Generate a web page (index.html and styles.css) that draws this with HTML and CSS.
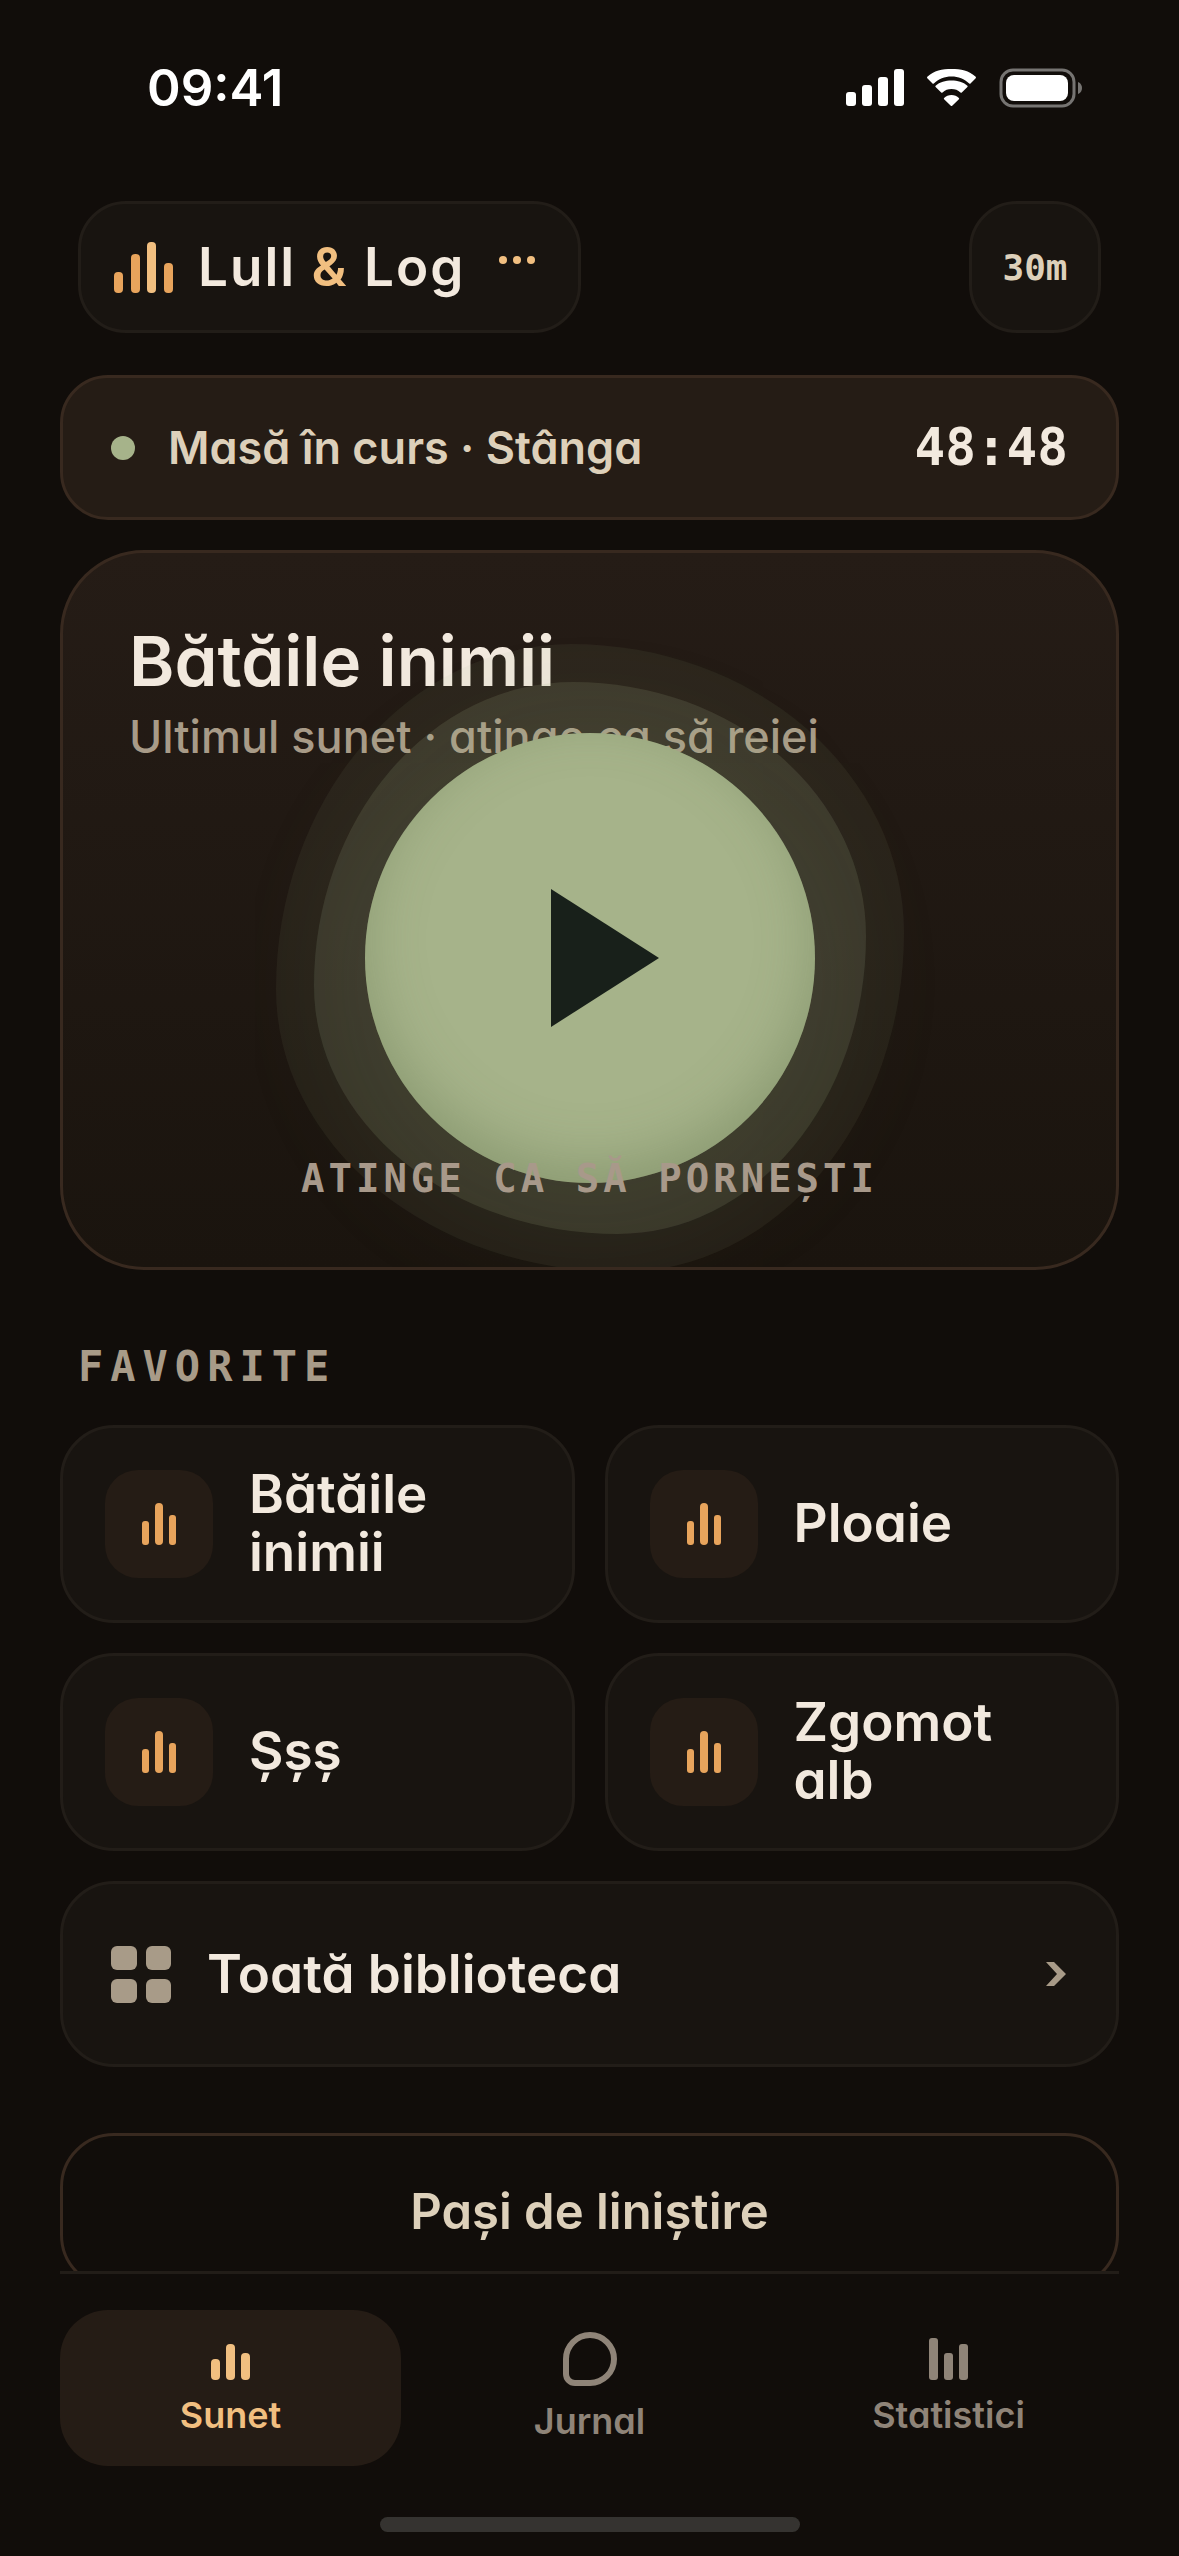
FILE: index.html
```html
<!DOCTYPE html>
<html lang="ro">
<head>
  <meta charset="utf-8">
  <meta name="viewport" content="width=device-width, initial-scale=1">
  <title>Lull &amp; Log</title>
  <link rel="stylesheet" href="styles.css">
</head>
<body>
  <div class="app">
    <div class="status-bar">
      <span class="status-time">09:41</span>
      <div class="status-icons">
        <svg width="58" height="38" viewBox="0 0 58 38" fill="#fff" aria-hidden="true">
          <rect x="0" y="23" width="10" height="14" rx="3"/>
          <rect x="16" y="16" width="10" height="21" rx="3"/>
          <rect x="32" y="8" width="10" height="29" rx="3"/>
          <rect x="48" y="0" width="10" height="37" rx="3"/>
        </svg>
        <svg width="51" height="38" viewBox="0 0 51 38" fill="#fff" aria-hidden="true">
          <path d="M25.500 7.500c6.800 0 13 2.600 17.700 7 .4.300 1 .300 1.300 0l5.200-5.300c.4-.4.400-1 0-1.400C43.200 1.600 34.600 0 25.500 0S7.800 1.600 1.300 7.800c-.4.400-.4 1 0 1.400l5.200 5.300c.3.300.9.300 1.300 0 4.700-4.400 10.900-7 17.700-7z"/>
          <path d="M25.500 20c3.400 0 6.600 1.200 9 3.400.4.400.9.400 1.300 0l5.600-5.300c.4-.4.400-1 0-1.400-4.200-3.800-9.800-5.200-15.900-5.200S13.800 12.900 9.600 16.700c-.4.400-.4 1 0 1.400l5.600 5.300c.4.400.9.400 1.300 0 2.400-2.200 5.600-3.400 9-3.400z"/>
          <path d="M32.900 28.900c.4.400.4.900 0 1.300l-6.700 6.600c-.4.400-1 .4-1.400 0l-6.700-6.600c-.4-.4-.4-.9 0-1.300 1.800-1.600 4.600-2.900 7.400-2.900s5.600 1.300 7.400 2.900z"/>
        </svg>
        <svg width="84" height="40" viewBox="0 0 84 40" aria-hidden="true">
          <rect x="2" y="2" width="73" height="36" rx="12" fill="none" stroke="#767472" stroke-width="3"/>
          <rect x="7" y="7" width="62" height="26" rx="8" fill="#fff"/>
          <path d="M79 14c3 1 4 4 4 6s-1 5-4 6z" fill="#767472"/>
        </svg>
      </div>
    </div>

    <header class="topbar">
      <button class="brand" type="button">
        <svg width="60" height="51" viewBox="0 0 60 51" fill="#e8a45c" aria-hidden="true">
          <rect x="0" y="30" width="9" height="21" rx="4"/>
          <rect x="17" y="12" width="9" height="39" rx="4"/>
          <rect x="33" y="0" width="9" height="51" rx="4" fill="#f1bf80"/>
          <rect x="50" y="21" width="9" height="30" rx="4"/>
        </svg>
        <span class="brand-name">Lull <span class="brand-amp">&amp;</span> Log</span>
        <svg class="brand-more" width="38" height="10" viewBox="0 0 38 10" fill="#f1bf80" aria-hidden="true">
          <circle cx="5" cy="5" r="4"/><circle cx="19" cy="5" r="4"/><circle cx="33" cy="5" r="4"/>
        </svg>
      </button>
      <button class="timer" type="button">30m</button>
    </header>

    <main class="content">
      <a class="session" href="#jurnal">
        <span class="session-dot"></span>
        <span class="session-label">Masă în curs · Stânga</span>
        <span class="session-time">48:48</span>
      </a>

      <section class="hero">
        <div class="hero-text">
          <h1 class="hero-title">Bătăile inimii</h1>
          <p class="hero-sub">Ultimul sunet · atinge ca să reiei</p>
        </div>
        <button class="orb" type="button" aria-label="Pornește">
          <span class="orb-ring orb-ring-outer"></span>
          <span class="orb-ring orb-ring-inner"></span>
          <span class="orb-disc">
            <svg width="108" height="138" viewBox="0 0 108 138" aria-hidden="true"><path d="M0 0L108 69L0 138z" fill="#18201a"/></svg>
          </span>
        </button>
        <p class="hero-hint">ATINGE CA SĂ PORNEȘTI</p>
      </section>

      <h2 class="section-title">FAVORITE</h2>
      <div class="favorites">
        <button class="favorite" type="button">
          <span class="favorite-icon"><svg width="34" height="42" viewBox="0 0 34 42" fill="#e8a45c" aria-hidden="true"><rect x="0" y="18" width="7" height="24" rx="3"/><rect x="13" y="0" width="8" height="42" rx="4"/><rect x="27" y="12" width="7" height="30" rx="3"/></svg></span>
          <span class="favorite-name">Bătăile inimii</span>
        </button>
        <button class="favorite" type="button">
          <span class="favorite-icon"><svg width="34" height="42" viewBox="0 0 34 42" fill="#e8a45c" aria-hidden="true"><rect x="0" y="18" width="7" height="24" rx="3"/><rect x="13" y="0" width="8" height="42" rx="4"/><rect x="27" y="12" width="7" height="30" rx="3"/></svg></span>
          <span class="favorite-name">Ploaie</span>
        </button>
        <button class="favorite" type="button">
          <span class="favorite-icon"><svg width="34" height="42" viewBox="0 0 34 42" fill="#e8a45c" aria-hidden="true"><rect x="0" y="18" width="7" height="24" rx="3"/><rect x="13" y="0" width="8" height="42" rx="4"/><rect x="27" y="12" width="7" height="30" rx="3"/></svg></span>
          <span class="favorite-name">Șșș</span>
        </button>
        <button class="favorite" type="button">
          <span class="favorite-icon"><svg width="34" height="42" viewBox="0 0 34 42" fill="#e8a45c" aria-hidden="true"><rect x="0" y="18" width="7" height="24" rx="3"/><rect x="13" y="0" width="8" height="42" rx="4"/><rect x="27" y="12" width="7" height="30" rx="3"/></svg></span>
          <span class="favorite-name">Zgomot alb</span>
        </button>
      </div>

      <a class="library" href="#biblioteca">
        <svg width="60" height="57" viewBox="0 0 60 57" fill="#a89b88" aria-hidden="true">
          <rect x="0" y="0" width="26" height="24" rx="6"/><rect x="35" y="0" width="25" height="24" rx="6"/>
          <rect x="0" y="33" width="26" height="24" rx="6"/><rect x="35" y="33" width="25" height="24" rx="6"/>
        </svg>
        <span class="library-label">Toată biblioteca</span>
        <svg width="22" height="24" viewBox="0 0 22 24" fill="#a89b88" aria-hidden="true"><path d="M0 0h8l12 12L8 24H0l11-12z"/></svg>
      </a>

      <button class="calm" type="button">Pași de liniștire</button>
    </main>

    <nav class="tabs">
      <a class="tab tab-active" href="#sunet" aria-current="page">
        <svg width="39" height="42" viewBox="0 0 39 42" fill="currentColor" aria-hidden="true"><rect x="0" y="21" width="9" height="21" rx="4"/><rect x="15" y="6" width="9" height="36" rx="4"/><rect x="30" y="15" width="9" height="27" rx="4"/></svg>
        <span>Sunet</span>
      </a>
      <a class="tab" href="#jurnal">
        <svg width="54" height="54" viewBox="0 0 54 54" fill="none" stroke="currentColor" stroke-width="6" aria-hidden="true"><path d="M27 3a24 24 0 0 1 0 48H12a9 9 0 0 1-9-9V27A24 24 0 0 1 27 3z"/></svg>
        <span>Jurnal</span>
      </a>
      <a class="tab" href="#statistici">
        <svg width="39" height="42" viewBox="0 0 39 42" fill="currentColor" aria-hidden="true"><rect x="0" y="0" width="9" height="42" rx="3"/><rect x="15" y="15" width="9" height="27" rx="3"/><rect x="30" y="6" width="9" height="36" rx="3"/></svg>
        <span>Statistici</span>
      </a>
    </nav>
    <div class="home-indicator"></div>
  </div>
</body>
</html>
```
FILE: styles.css
```css
:root {
  --bg: #110d0a;
  --card: #181410;
  --card-line: #221d18;
  --raised: #251c15;
  --raised-line: #38291f;
  --text: #f2e9de;
  --text-soft: #ddd0ba;
  --text-mute: #a89b88;
  --amber: #f1bf80;
  --sage: #a6b38a;
  --mono: "DejaVu Sans Mono", monospace;
}

* { box-sizing: border-box; }

body {
  margin: 0;
  background: var(--bg);
  color: var(--text);
  font-family: Inter, "Noto Sans", sans-serif;
  font-feature-settings: "cv11";
}

button {
  font: inherit;
  font-feature-settings: inherit;
  color: inherit;
  background: none;
  border: 0;
  padding: 0;
  text-align: left;
  cursor: pointer;
}

a { color: inherit; text-decoration: none; }
h1, h2, p { margin: 0; }
svg { display: block; flex: none; }

.app {
  display: flex;
  flex-direction: column;
  height: 100vh;
}

/* Status bar */
.status-bar {
  display: flex;
  justify-content: space-between;
  align-items: center;
  padding: 57px 96px 82px 147px;
}
.status-time {
  color: #fff;
  font-size: 51px;
  line-height: 62px;
  font-weight: 600;
}
.status-icons {
  display: flex;
  align-items: center;
  gap: 22px;
}

/* Header */
.topbar {
  display: flex;
  justify-content: space-between;
  padding: 0 78px 42px;
}
.brand, .timer {
  height: 132px;
  border: 3px solid var(--card-line);
  border-radius: 48px;
  background: var(--card);
}
.brand {
  display: flex;
  align-items: center;
  gap: 24px;
  padding: 0 42px 0 33px;
}
.brand-name {
  font-size: 53px;
  font-weight: 600;
  letter-spacing: 2px;
}
.brand-amp { color: var(--amber); }
.brand-more { margin: -14px 0 0 9px; }
.timer {
  width: 132px;
  color: var(--text-soft);
  font: 700 36px var(--mono);
  text-align: center;
}

/* Scrolling content */
.content {
  flex: 1;
  min-height: 0;
  overflow-y: auto;
  scrollbar-width: none;
  padding: 0 60px 42px;
}

.session {
  display: flex;
  align-items: center;
  height: 145px;
  padding: 0 48px;
  border: 3px solid var(--raised-line);
  border-radius: 48px;
  background: var(--raised);
}
.session-dot {
  width: 24px;
  height: 24px;
  margin-right: 33px;
  border-radius: 50%;
  background: var(--sage);
}
.session-label {
  flex: 1;
  color: var(--text-soft);
  font-size: 45px;
  font-weight: 600;
}
.session-time { font: 700 51px var(--mono); }

/* Hero player: title, orb and hint share one grid cell */
.hero {
  display: grid;
  min-height: 720px;
  margin-top: 30px;
  padding: 66px;
  overflow: hidden;
  border: 3px solid var(--raised-line);
  border-radius: 84px;
  background: linear-gradient(#251c16, #1a140e);
}
.hero > * { grid-area: 1 / 1; }
.hero-title {
  font-size: 69px;
  line-height: 84px;
  font-weight: 600;
}
.hero-sub {
  color: var(--text-mute);
  font-size: 45px;
  line-height: 68px;
  font-weight: 500;
}
.orb {
  position: relative;
  place-self: center;
  width: 450px;
  height: 450px;
  margin-top: 96px;
}
.orb-ring {
  position: absolute;
  border-radius: 47% 53% 45% 55% / 55% 46% 54% 45%;
}
.orb-ring-outer {
  inset: -89px;
  background: rgb(166 179 138 / 7%);
}
.orb-ring-inner {
  inset: -51px;
  background: rgb(166 179 138 / 15%);
}
.orb-disc {
  position: relative;
  display: grid;
  place-items: center;
  height: 100%;
  padding-left: 30px;
  border-radius: 50%;
  background: var(--sage);
  box-shadow:
    inset 0 -18px 54px rgb(90 110 70 / 35%),
    0 24px 150px rgb(166 179 138 / 11%);
}
.hero-hint {
  place-self: end center;
  z-index: 1;
  color: #a8998a;
  font: 700 39px/44px var(--mono);
  letter-spacing: 4px;
}

/* Favourites */
.section-title {
  margin: 72px 0 33px 18px;
  color: var(--text-mute);
  font: 700 42px/50px var(--mono);
  letter-spacing: 7px;
}
.favorites {
  display: grid;
  grid-template-columns: 1fr 1fr;
  gap: 30px;
}
.favorite {
  display: flex;
  align-items: center;
  gap: 36px;
  min-height: 198px;
  padding: 0 42px;
  border: 3px solid var(--card-line);
  border-radius: 54px;
  background: var(--card);
}
.favorite-icon {
  display: grid;
  place-items: center;
  flex: none;
  width: 108px;
  height: 108px;
  border-radius: 33px;
  background: var(--raised);
}
.favorite-name {
  max-width: 220px;
  padding-bottom: 3px;
  font-size: 53px;
  line-height: 58px;
  font-weight: 600;
}

.library {
  display: flex;
  align-items: center;
  gap: 36px;
  height: 186px;
  margin-top: 30px;
  padding: 0 48px;
  border: 3px solid var(--card-line);
  border-radius: 54px;
  background: var(--card);
}
.library-label {
  flex: 1;
  font-size: 53px;
  font-weight: 600;
}

.calm {
  width: 100%;
  height: 156px;
  margin-top: 66px;
  border: 3px solid var(--raised-line);
  border-radius: 54px;
  color: var(--text-soft);
  font-size: 49px;
  font-weight: 600;
  text-align: center;
}

/* Bottom navigation */
.tabs {
  display: grid;
  grid-template-columns: repeat(3, 1fr);
  gap: 18px;
  margin: 0 60px;
  padding: 36px 0 51px;
  border-top: 3px solid var(--card-line);
}
.tab {
  display: flex;
  flex-direction: column;
  align-items: center;
  justify-content: center;
  gap: 12px;
  height: 156px;
  border-radius: 48px;
  color: #8f8478;
  font-size: 36px;
  line-height: 46px;
  font-weight: 600;
}
.tab-active {
  background: var(--raised);
  color: var(--amber);
}
.home-indicator {
  align-self: center;
  width: 420px;
  height: 15px;
  margin-bottom: 24px;
  border-radius: 8px;
  background: #353330;
}
```
